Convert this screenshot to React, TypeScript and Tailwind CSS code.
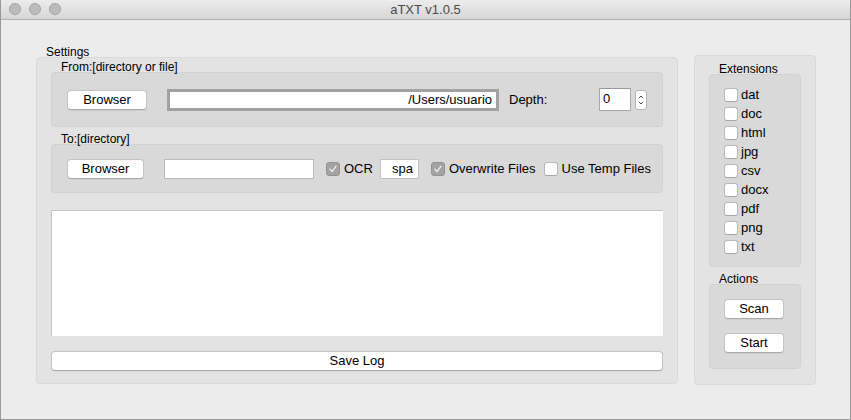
import React from 'react';

const EXTENSIONS = ['dat', 'doc', 'html', 'jpg', 'csv', 'docx', 'pdf', 'png', 'txt'];

function MacButton({ label, className = '' }: { label: string; className?: string }) {
  return (
    <button
      className={`h-[20px] bg-white rounded-[4px] border border-[#c3c3c3] border-b-[#a9a9a9] shadow-[0_0.5px_0_rgba(0,0,0,0.08)] text-[13px] leading-[18px] text-black ${className}`}
    >
      {label}
    </button>
  );
}

function CheckBox({ checked = false }: { checked?: boolean }) {
  if (checked) {
    return (
      <span className="w-[14px] h-[14px] shrink-0 rounded-[3px] bg-[#a3a3a3] border border-[#939393] flex items-center justify-center">
        <svg width="10" height="10" viewBox="0 0 10 10" fill="none">
          <path d="M2 5.3 L4.1 7.6 L8 2.2" stroke="#ededed" strokeWidth="1.4" strokeLinecap="round" strokeLinejoin="round" />
        </svg>
      </span>
    );
  }
  return (
    <span className="block w-[14px] h-[14px] shrink-0 rounded-[3px] bg-white border border-[#b9b9b9] border-b-[#a5a5a5]" />
  );
}

function GroupLabel({ text, className = '' }: { text: string; className?: string }) {
  return (
    <div className={`relative z-10 pl-[10px] h-[13px] leading-[17px] text-[12px] text-black ${className}`}>{text}</div>
  );
}

export default function App() {
  return (
    <div className="w-[851px] h-[420px] flex flex-col bg-[#ececec] border-l border-r border-b border-[#9a9a9a] font-['Liberation_Sans',Arial,sans-serif] text-black overflow-hidden">
      {/* title bar */}
      <div className="h-[20px] shrink-0 flex items-center bg-gradient-to-b from-[#ececec] to-[#d6d6d6] border-b border-[#b1b1b1]">
        <div className="w-[70px] flex items-center gap-[8px] pl-[8px] -mt-[1px]">
          <span className="w-[12px] h-[12px] rounded-full bg-[#bcbcbc] border border-[#a3a3a3]" />
          <span className="w-[12px] h-[12px] rounded-full bg-[#bcbcbc] border border-[#a3a3a3]" />
          <span className="w-[12px] h-[12px] rounded-full bg-[#bcbcbc] border border-[#a3a3a3]" />
        </div>
        <div className="flex-1 text-center text-[13px] leading-[19px] text-[#4a4a4a]">aTXT v1.0.5</div>
        <div className="w-[70px]" />
      </div>

      <div className="flex pl-[35px] pt-[24px] gap-[16px]">
        {/* Settings */}
        <div className="w-[642px]">
          <GroupLabel text="Settings" />
          <div className="h-[327px] bg-[#e3e3e3] border border-[#d9d9d9] rounded-[4px] px-[14px] pt-[1px]">
            <GroupLabel text="From:[directory or file]" />
            <div className="h-[55px] bg-[#d9d9d9] border border-[#d1d1d1] rounded-[4px] flex items-center pl-[15px]">
              <MacButton label="Browser" className="w-[80px]" />
              <div className="ml-[20px] w-[332px] h-[22px] bg-white border-[3px] border-[#a2a2a2] text-[13px] leading-[16px] text-right pr-[4px]">
                /Users/usuario
              </div>
              <span className="ml-[10px] w-[90px] text-[13px]">Depth:</span>
              <div className="w-[32px] h-[23px] bg-white border border-[#a8a8a8] border-t-[#9a9a9a] text-[13px] leading-[20px] pl-[3px]">
                0
              </div>
              <div className="ml-[4px] w-[12px] h-[20px] bg-white rounded-[3px] border border-[#b5b5b5] flex flex-col items-center justify-center gap-[2px]">
                <svg width="6" height="4" viewBox="0 0 6 4" fill="none">
                  <path d="M0.8 3.3 L3 1 L5.2 3.3" stroke="#4a4a4a" strokeWidth="1" />
                </svg>
                <svg width="6" height="4" viewBox="0 0 6 4" fill="none">
                  <path d="M0.8 0.7 L3 3 L5.2 0.7" stroke="#4a4a4a" strokeWidth="1" />
                </svg>
              </div>
            </div>

            <GroupLabel text="To:[directory]" className="mt-[4px]" />
            <div className="h-[49px] bg-[#d9d9d9] border border-[#d1d1d1] rounded-[4px] flex items-center pl-[15px] text-[13px]">
              <MacButton label="Browser" className="w-[77px]" />
              <div className="ml-[20px] w-[150px] h-[20px] bg-white border border-[#b9b9b9]" />
              <span className="ml-[12px]">
                <CheckBox checked />
              </span>
              <span className="ml-[4px]">OCR</span>
              <div className="ml-[7px] w-[39px] h-[20px] bg-white border border-[#c2c2c2] leading-[18px] text-right pr-[5px]">
                spa
              </div>
              <span className="ml-[12px]">
                <CheckBox checked />
              </span>
              <span className="ml-[4px]">Overwrite Files</span>
              <span className="ml-[8px]">
                <CheckBox />
              </span>
              <span className="ml-[4px]">Use Temp Files</span>
            </div>

            <div className="mt-[17px] h-[126px] bg-white border border-[#c4c4c4] border-b-0 border-r-0" />

            <MacButton label="Save Log" className="mt-[15px] w-full block" />
          </div>
        </div>

        {/* right panel */}
        <div className="mt-[11px] w-[122px] h-[330px] bg-[#e3e3e3] border border-[#d9d9d9] rounded-[4px] px-[14px] pt-[5px]">
          <GroupLabel text="Extensions" />
          <div className="h-[193px] bg-[#d9d9d9] border border-[#d1d1d1] rounded-[4px] pl-[14px] pt-[13px] flex flex-col gap-[5px]">
            {EXTENSIONS.map((ext) => (
              <label key={ext} className="h-[14px] flex items-center gap-[3px] text-[13px] leading-[14px]">
                <CheckBox />
                {ext}
              </label>
            ))}
          </div>

          <GroupLabel text="Actions" className="mt-[4px]" />
          <div className="h-[85px] bg-[#d9d9d9] border border-[#d1d1d1] rounded-[4px] pl-[14px] pt-[14px] flex flex-col gap-[14px]">
            <MacButton label="Scan" className="w-[60px]" />
            <MacButton label="Start" className="w-[60px]" />
          </div>
        </div>
      </div>
    </div>
  );
}
